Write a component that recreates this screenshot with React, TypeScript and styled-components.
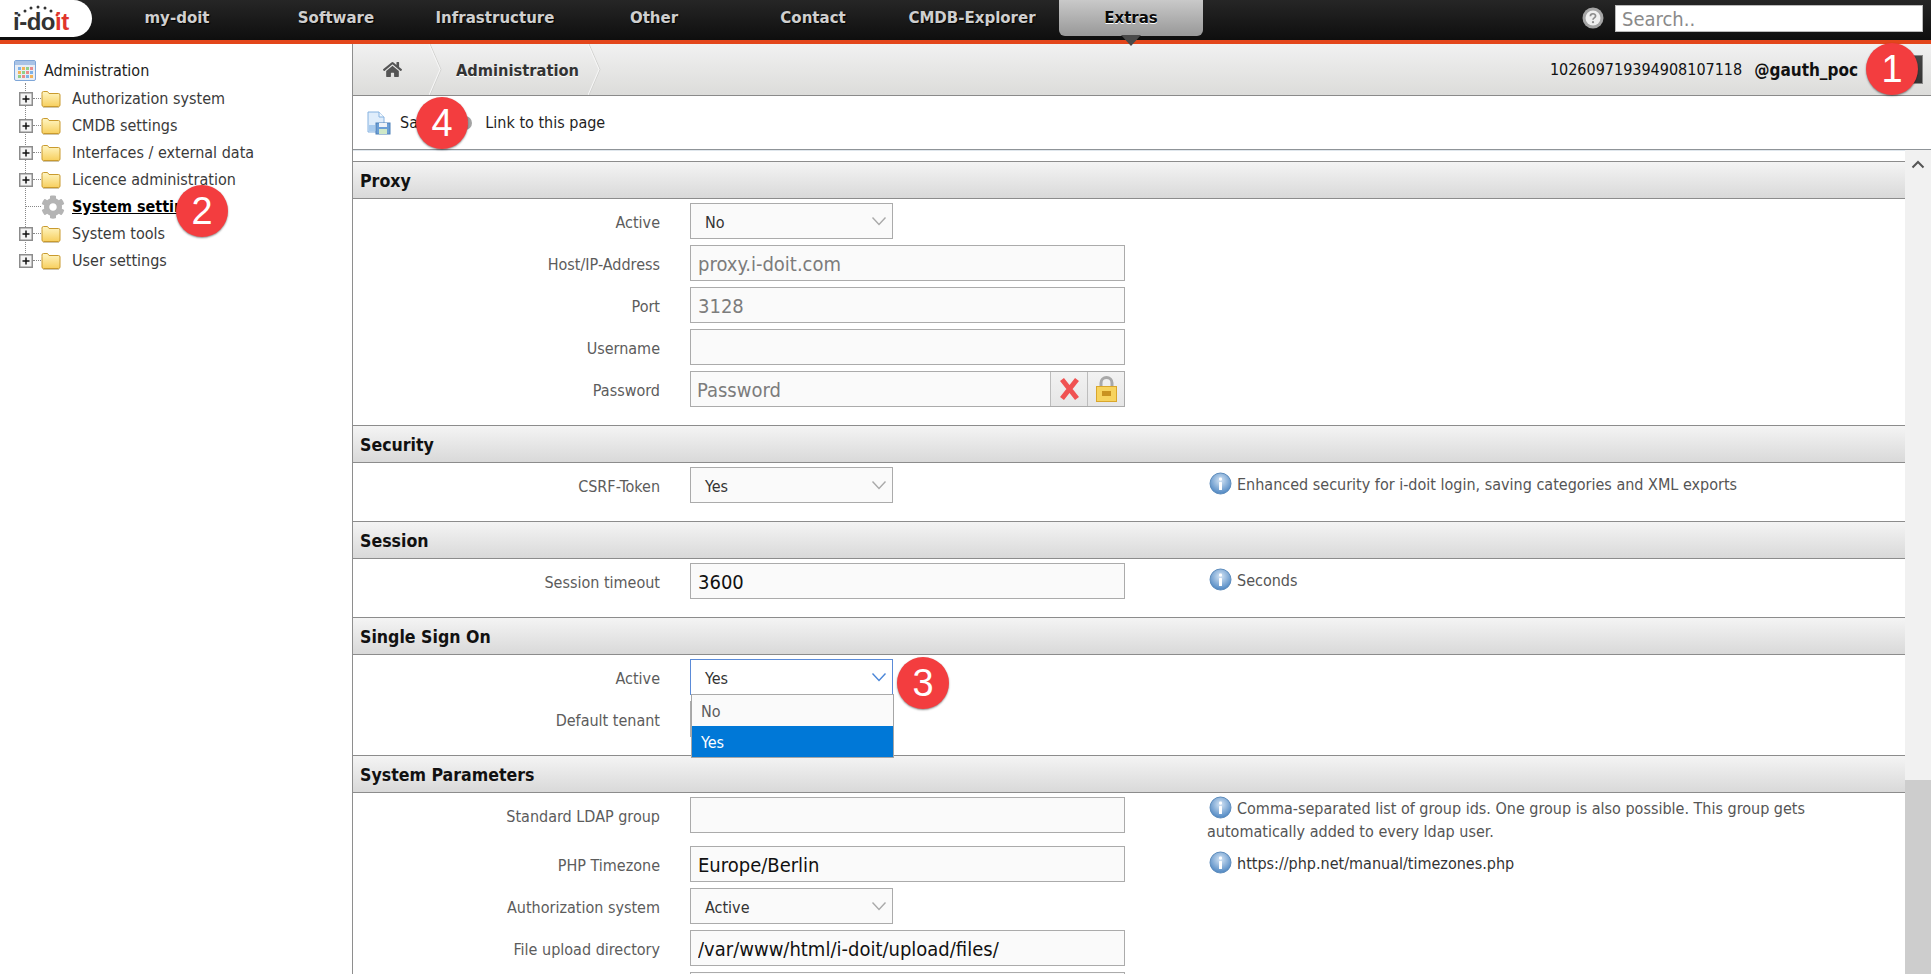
import React from "react";
import styled, { createGlobalStyle } from "styled-components";
import { FaHome, FaCog } from "react-icons/fa";

const Global = createGlobalStyle`
  html, body { margin: 0; padding: 0; height: 100%; overflow: hidden; background: #fff; }
  * { box-sizing: border-box; }
  body { font-family: "DejaVu Sans Condensed", "DejaVu Sans", sans-serif; font-size: 16px; color: #222; }
`;

const Page = styled.div`
  position: relative;
  width: 1931px;
  height: 974px;
  display: flex;
  flex-direction: column;
  overflow: hidden;
`;

const TopBar = styled.header`
  height: 44px;
  flex: none;
  display: flex;
  align-items: flex-start;
  background: linear-gradient(#262626 0, #0e0e0e 40px);
  border-bottom: 4px solid #e3461b;
`;

const Logo = styled.div`
  position: relative;
  width: 92px;
  height: 37px;
  margin-right: 13px;
  flex: none;
  padding: 10px 0 0 13px;
  background: #fff;
  border-radius: 0 19px 19px 0;
  font-family: "Liberation Sans", sans-serif;
  font-size: 24px;
  line-height: 24px;
  font-weight: 700;
  letter-spacing: -0.5px;
  color: #333;
`;

const LogoRed = styled.span`
  color: #e0352b;
`;

const LogoDots = styled.svg`
  position: absolute;
  left: 16px;
  top: 5px;
`;

const Nav = styled.nav`
  display: flex;
  gap: 15px;
`;

const NavItem = styled.a<{ $active?: boolean }>`
  position: relative;
  width: 144px;
  height: ${(p) => (p.$active ? "36px" : "33px")};
  display: flex;
  align-items: ${(p) => (p.$active ? "flex-start" : "center")};
  justify-content: center;
  padding-top: ${(p) => (p.$active ? "7px" : "0")};
  font-weight: 700;
  font-size: 16.7px;
  line-height: 20px;
  color: ${(p) => (p.$active ? "#0a0a0a" : "#cfcfcf")};
  text-shadow: ${(p) => (p.$active ? "0 1px 0 #fff" : "1px 1px 1px #000")};
  background: ${(p) => (p.$active ? "linear-gradient(#c9c9c9, #989898)" : "none")};
  border-radius: ${(p) => (p.$active ? "0 0 6px 6px" : "0")};
`;

const NavPointer = styled.span`
  position: absolute;
  left: 62px;
  top: 35px;
  width: 0;
  height: 0;
  border-left: 10px solid transparent;
  border-right: 10px solid transparent;
  border-top: 11px solid #4a4a4a;
`;

const TopRight = styled.div`
  margin-left: auto;
  display: flex;
  align-items: center;
  gap: 11px;
  padding: 5px 8px 0 0;
`;

const SearchBox = styled.input`
  width: 308px;
  height: 27px;
  border: 1px solid #bbb;
  background: #fff;
  padding: 0 6px;
  font: inherit;
  font-size: 20px;
  color: #222;
  outline: none;
  &::placeholder { color: #8a8a8a; opacity: 1; }
`;

const Main = styled.div`
  flex: 1;
  min-height: 0;
  display: flex;
`;

const Sidebar = styled.aside`
  width: 353px;
  flex: none;
  border-right: 1px solid #8e8e8e;
  padding: 17px 0 0 14px;
`;

const TreeRoot = styled.div`
  display: flex;
  align-items: center;
  gap: 8px;
  height: 20px;
  padding-bottom: 1px;
  color: #1c1c1c;
`;

const TreeChildren = styled.div`
  margin: 2px 0 0 11px;
  padding-top: 2px;
  border-left: 1px dotted #888;
  width: 330px;
  height: 176px;
`;

const TreeRow = styled.div`
  height: 27px;
  display: flex;
  align-items: center;
  margin-left: -7px;
`;

const TreeConnector = styled.span<{ $wide?: boolean }>`
  width: ${(p) => (p.$wide ? "15px" : "8px")};
  margin-left: ${(p) => (p.$wide ? "7px" : "0")};
  border-top: 1px dotted #888;
  flex: none;
`;

const TreeLabel = styled.span<{ $current?: boolean }>`
  margin-left: ${(p) => (p.$current ? "7px" : "11px")};
  color: ${(p) => (p.$current ? "#000" : "#3a3a3a")};
  font-weight: ${(p) => (p.$current ? 700 : 400)};
  text-decoration: ${(p) => (p.$current ? "underline" : "none")};
  white-space: nowrap;
`;

const GearIcon = styled(FaCog)`
  color: #b4b4b4;
  font-size: 24px;
  flex: none;
`;

const Content = styled.main`
  flex: 1;
  min-width: 0;
  display: flex;
  flex-direction: column;
`;

const Breadcrumb = styled.div`
  height: 52px;
  flex: none;
  display: flex;
  align-items: stretch;
  background: linear-gradient(#f1f1f1, #dcdcda);
  border-bottom: 1px solid #8a8a8a;
`;

const HomeCrumb = styled.div`
  width: 76px;
  display: flex;
  align-items: center;
  justify-content: center;
  padding-left: 2px;
  color: #555;
  font-size: 19px;
`;

const CrumbText = styled.div`
  padding: 2px 9px 0 14px;
  display: flex;
  align-items: center;
  font-weight: 700;
  font-size: 16.3px;
  color: #333;
  text-shadow: 0 1px 0 #fff;
`;

const BreadcrumbRight = styled.div`
  margin-left: auto;
  display: flex;
  align-items: center;
  padding: 0 8px 0 0;
  color: #111;
`;

const UserName = styled.b`
  margin: 0 35px 0 12px;
  font-size: 17px;
  color: #111;
`;

const UserButton = styled.div`
  width: 30px;
  height: 29px;
  background: linear-gradient(135deg, #555, #333);
  border: 1px solid #888;
`;

const Toolbar = styled.div`
  height: 54px;
  flex: none;
  display: flex;
  align-items: center;
  padding-left: 14px;
  background: #fff;
  border-bottom: 1px solid #8f9498;
  box-shadow: 0 1px 0 #dfe6ec;
  color: #1f1f1f;
`;

const ToolLabel = styled.span`
  margin-left: 9px;
`;

const LinkLabel = styled.span`
  margin-left: 12px;
`;

const LinkIcon = styled.svg`
  margin-left: 22px;
`;

const ScrollRow = styled.div`
  flex: 1;
  min-height: 0;
  display: flex;
`;

const Sections = styled.div`
  flex: 1;
  min-width: 0;
  overflow: hidden;
  padding-top: 11px;
  position: relative;
`;

const FakeScrollbar = styled.div`
  width: 26px;
  flex: none;
  background: #f1f1f1;
  display: flex;
  flex-direction: column;
  align-items: center;
  padding-top: 10px;
`;

const ScrollThumb = styled.div`
  width: 100%;
  height: 194px;
  margin-top: auto;
  background: #cdcdcd;
`;

const SectionHead = styled.h2`
  margin: 0;
  height: 38px;
  display: flex;
  align-items: center;
  padding: 1px 0 0 7px;
  font-size: 17.6px;
  font-weight: 700;
  color: #111;
  background: linear-gradient(#f4f4f4, #d9d9d9);
  border-top: 1px solid #8c8c8c;
  border-bottom: 1px solid #8c8c8c;
`;

const SectionBody = styled.div`
  display: flex;
  flex-direction: column;
  gap: 6px;
  padding: 4px 0 18px;
`;

const Row = styled.div<{ $tall?: boolean }>`
  display: grid;
  grid-template-columns: 307px 435px 1fr;
  column-gap: 30px;
  height: ${(p) => (p.$tall ? "43px" : "36px")};
  position: relative;
`;

const RowLabel = styled.label`
  height: 36px;
  display: flex;
  align-items: center;
  justify-content: flex-end;
  padding-top: 2px;
  color: #5c5c5c;
`;

const TextField = styled.input<{ $muted?: boolean }>`
  width: 435px;
  height: 36px;
  border: 1px solid #ababab;
  background: #fafafa;
  padding: 1px 7px 0 7px;
  font: inherit;
  font-size: 20px;
  color: ${(p) => (p.$muted ? "#7c7c7c" : "#111")};
  outline: none;
  &::placeholder { color: #7c7c7c; opacity: 1; }
`;

const GroupField = styled.div`
  display: flex;
  width: 435px;
  height: 36px;
  border: 1px solid #ababab;
  background: #fafafa;
`;

const GroupInput = styled.input`
  flex: 1;
  min-width: 0;
  border: 0;
  background: transparent;
  padding: 1px 6px 0;
  font: inherit;
  font-size: 20px;
  outline: none;
  &::placeholder { color: #7c7c7c; opacity: 1; }
`;

const AddOn = styled.span`
  width: 37px;
  flex: none;
  display: flex;
  align-items: center;
  justify-content: center;
  background: linear-gradient(#f2f2f2, #e6e6e6);
  border-left: 1px solid #bdbdbd;
`;

const SelectBox = styled.div<{ $open?: boolean }>`
  position: relative;
  width: 203px;
  height: 36px;
  display: flex;
  align-items: center;
  justify-content: space-between;
  padding: 2px 5px 0 14px;
  background: ${(p) => (p.$open ? "#fff" : "#fafafa")};
  border: 1px solid ${(p) => (p.$open ? "#5b8bd8" : "#ababab")};
  color: #333;
`;

const Menu = styled.div`
  position: absolute;
  left: 0;
  top: 34px;
  width: 203px;
  background: #fafafa;
  border: 1px solid #a6a6a6;
  border-top: 1px solid #aaa;
  z-index: 3;
`;

const MenuItem = styled.div<{ $selected?: boolean }>`
  height: 31px;
  display: flex;
  align-items: center;
  padding: 2px 0 0 9px;
  color: ${(p) => (p.$selected ? "#fff" : "#5c5c5c")};
  background: ${(p) => (p.$selected ? "#0078d7" : "transparent")};
`;

const Description = styled.div<{ $top?: boolean }>`
  margin-left: 52px;
  height: 36px;
  line-height: 23px;
  padding-top: ${(p) => (p.$top ? "0" : "5px")};
  margin-top: ${(p) => (p.$top ? "-1px" : "0")};
  color: #555;
  width: 620px;
`;

const DescLink = styled.span`
  color: #333;
`;

const InfoWrap = styled.svg`
  vertical-align: -5px;
  margin: 0 5px 0 2px;
`;

const Badge = styled.div<{ $x: number; $y: number }>`
  position: absolute;
  left: ${(p) => p.$x - 26}px;
  top: ${(p) => p.$y - 26}px;
  width: 52px;
  height: 52px;
  border-radius: 50%;
  background: #f33d3f;
  box-shadow: 0 1px 2px rgba(0, 0, 0, 0.45);
  color: #fff;
  display: flex;
  align-items: center;
  justify-content: center;
  font-family: "Liberation Sans", sans-serif;
  font-size: 38px;
  line-height: 1;
  z-index: 5;
`;

const Info = () => (
  <InfoWrap width="23" height="23" viewBox="0 0 23 23">
    <defs>
      <radialGradient id="ig" cx="50%" cy="35%" r="65%">
        <stop offset="0" stopColor="#d5e5f5" />
        <stop offset="1" stopColor="#4d86c2" />
      </radialGradient>
    </defs>
    <circle cx="11.5" cy="11.5" r="10.5" fill="url(#ig)" stroke="#5d8cbc" />
    <rect x="10" y="10" width="3" height="8" rx="0.5" fill="#fff" />
    <rect x="10" y="5.5" width="3" height="3" rx="1" fill="#fff" />
  </InfoWrap>
);

const Chevron = ({ color = "#a9a9a9" }: { color?: string }) => (
  <svg width="16" height="10" viewBox="0 0 16 10" style={{ marginTop: "-2px" }}>
    <path d="M1.5 1.5 8 8.5l6.5-7" fill="none" stroke={color} strokeWidth="1.4" />
  </svg>
);

const Select = ({ value, open }: { value: string; open?: boolean }) => (
  <SelectBox $open={open}>
    {value}
    <Chevron color={open ? "#4a86d8" : "#a9a9a9"} />
    {open && (
      <Menu>
        <MenuItem>No</MenuItem>
        <MenuItem $selected>Yes</MenuItem>
      </Menu>
    )}
  </SelectBox>
);

const Folder = () => (
  <svg width="20" height="18" viewBox="0 0 20 18" style={{ flex: "none" }}>
    <defs>
      <linearGradient id="fg" x1="0" y1="0" x2="0" y2="1">
        <stop offset="0" stopColor="#fff6c4" />
        <stop offset="1" stopColor="#f7cf5e" />
      </linearGradient>
    </defs>
    <path d="M1 4.5V3q0-1.5 1.5-1.5h4L8 3.5h9.5Q19 3.5 19 5v10q0 1.5-1.5 1.5h-15Q1 16.5 1 15Z" fill="url(#fg)" stroke="#c99a2e" />
    <path d="M2 17.5h16" stroke="#cfc6ad" />
  </svg>
);

const PlusBox = () => (
  <svg width="14" height="14" viewBox="0 0 14 14" style={{ flex: "none" }}>
    <rect x="0.75" y="0.75" width="12.5" height="12.5" fill="#f4f4f4" stroke="#8c8c8c" strokeWidth="1.5" />
    <path d="M3.5 7h7M7 3.5v7" stroke="#111" strokeWidth="1.5" />
  </svg>
);

const AdminIcon = () => (
  <svg width="22" height="21" viewBox="0 0 22 21" style={{ flex: "none" }}>
    <rect x="0.5" y="0.5" width="21" height="20" rx="1.5" fill="#e9eef5" stroke="#7ea6d8" />
    <rect x="1" y="1" width="20" height="4" fill="#a9c3e6" />
    {[7, 11, 15].map((y, r) =>
      [4, 8, 12, 16].map((x, c) => (
        <rect key={`${x}${y}`} x={x} y={y} width="3" height="3" fill={["#7fb2e8", "#f2b45a", "#8fcf8a", "#e98b8b"][(r + c) % 4]} />
      ))
    )}
  </svg>
);

const SaveIcon = () => (
  <svg width="24" height="24" viewBox="0 0 24 24" style={{ flex: "none" }}>
    <path d="M1 1h11l5 5v15H1Z" fill="#dfedfb" stroke="#86b2e0" />
    <path d="M12 1v5h5" fill="#f4f9fe" stroke="#86b2e0" />
    <path d="M2 14h6v6H2Z" fill="#a8cbee" />
    <rect x="9" y="12" width="14" height="11" fill="#6c9fd6" stroke="#4c80b8" />
    <rect x="12" y="12" width="8" height="4" fill="#eef3f8" />
    <rect x="12" y="18" width="8" height="5" fill="#cfe8c8" />
  </svg>
);

const HelpIcon = () => (
  <svg width="22" height="22" viewBox="0 0 22 22" style={{ flex: "none", marginTop: "-1px" }}>
    <circle cx="11" cy="11" r="10.5" fill="#a5a5a5" />
    <circle cx="11" cy="11" r="7.5" fill="#efefef" />
    <path d="M8.4 9.2c0-3.2 5.2-3.2 5.2-.2 0 1.9-2.6 1.8-2.6 3.7" fill="none" stroke="#8c8c8c" strokeWidth="1.7" />
    <circle cx="11" cy="15.2" r="1.1" fill="#8c8c8c" />
  </svg>
);

const CrumbEdge = () => (
  <svg width="13" height="51" viewBox="0 0 13 51" style={{ flex: "none" }}>
    <path d="M1 0l11 25.5L1 51" fill="none" stroke="#d2d2d0" />
    <path d="M0 0l11 25.5L0 51" fill="none" stroke="#f7f7f7" />
  </svg>
);

const RedX = () => (
  <svg width="21" height="24" viewBox="0 0 21 24">
    <path d="M3 2.5l15 19M18 2.5l-15 19" stroke="#f05252" strokeWidth="5" />
  </svg>
);

const Lock = () => (
  <svg width="23" height="26" viewBox="0 0 23 26">
    <path d="M6 11V7a5.5 5.5 0 0 1 11 0v4" fill="none" stroke="#a8a8a8" strokeWidth="3" />
    <rect x="1.5" y="10.5" width="20" height="15" fill="#f7d35e" stroke="#d9a62c" />
    <rect x="7" y="15" width="9" height="5" fill="#c99220" />
  </svg>
);

const Field = ({ label, children, tall, desc }: { label: string; children: React.ReactNode; tall?: boolean; desc?: React.ReactNode }) => (
  <Row $tall={tall}>
    <RowLabel>{label}</RowLabel>
    <div>{children}</div>
    {desc}
  </Row>
);

const tree: { label: string; current?: boolean }[] = [
  { label: "Authorization system" },
  { label: "CMDB settings" },
  { label: "Interfaces / external data" },
  { label: "Licence administration" },
  { label: "System settings", current: true },
  { label: "System tools" },
  { label: "User settings" },
];

const navItems = ["my-doit", "Software", "Infrastructure", "Other", "Contact", "CMDB-Explorer"];

export default function App() {
  return (
    <Page>
      <Global />
      <TopBar>
        <Logo>
          i-do<LogoRed>it</LogoRed>
          <LogoDots width="46" height="12" viewBox="0 0 46 12">
            {[[3, 10], [9, 6], [15, 3], [22, 2], [29, 3], [35, 6], [41, 10]].map(([x, y]) => (
              <circle key={x} cx={x} cy={y} r="1.5" fill={x === 41 ? "#e0352b" : "#333"} />
            ))}
          </LogoDots>
        </Logo>
        <Nav>
          {navItems.map((n) => (
            <NavItem key={n}>{n}</NavItem>
          ))}
          <NavItem $active>
            Extras
            <NavPointer />
          </NavItem>
        </Nav>
        <TopRight>
          <HelpIcon />
          <SearchBox placeholder="Search.." readOnly />
        </TopRight>
      </TopBar>
      <Main>
        <Sidebar>
          <TreeRoot>
            <AdminIcon />
            Administration
          </TreeRoot>
          <TreeChildren>
            {tree.map((t) => (
              <TreeRow key={t.label}>
                {t.current ? (
                  <>
                    <TreeConnector $wide />
                    <GearIcon />
                  </>
                ) : (
                  <>
                    <PlusBox />
                    <TreeConnector />
                    <Folder />
                  </>
                )}
                <TreeLabel $current={t.current}>{t.label}</TreeLabel>
              </TreeRow>
            ))}
          </TreeChildren>
        </Sidebar>
        <Content>
          <Breadcrumb>
            <HomeCrumb>
              <FaHome />
            </HomeCrumb>
            <CrumbEdge />
            <CrumbText>Administration</CrumbText>
            <CrumbEdge />
            <BreadcrumbRight>
              102609719394908107118
              <UserName>@gauth_poc</UserName>
              <UserButton />
            </BreadcrumbRight>
          </Breadcrumb>
          <Toolbar>
            <SaveIcon />
            <ToolLabel>Save</ToolLabel>
            <LinkIcon width="16" height="16" viewBox="0 0 16 16">
              <circle cx="8" cy="8" r="7" fill="#a3a3a3" />
              <circle cx="8" cy="8" r="3" fill="#eee" />
            </LinkIcon>
            <LinkLabel>Link to this page</LinkLabel>
          </Toolbar>
          <ScrollRow>
            <Sections>
              <SectionHead>Proxy</SectionHead>
              <SectionBody>
                <Field label="Active"><Select value="No" /></Field>
                <Field label="Host/IP-Address"><TextField $muted readOnly value="proxy.i-doit.com" /></Field>
                <Field label="Port"><TextField $muted readOnly value="3128" /></Field>
                <Field label="Username"><TextField readOnly /></Field>
                <Field label="Password">
                  <GroupField>
                    <GroupInput placeholder="Password" readOnly />
                    <AddOn><RedX /></AddOn>
                    <AddOn><Lock /></AddOn>
                  </GroupField>
                </Field>
              </SectionBody>
              <SectionHead>Security</SectionHead>
              <SectionBody>
                <Field label="CSRF-Token" desc={<Description><Info />Enhanced security for i-doit login, saving categories and XML exports</Description>}>
                  <Select value="Yes" />
                </Field>
              </SectionBody>
              <SectionHead>Session</SectionHead>
              <SectionBody>
                <Field label="Session timeout" desc={<Description><Info />Seconds</Description>}>
                  <TextField readOnly value="3600" />
                </Field>
              </SectionBody>
              <SectionHead>Single Sign On</SectionHead>
              <SectionBody>
                <Field label="Active"><Select value="Yes" open /></Field>
                <Field label="Default tenant"><Select value="" /></Field>
              </SectionBody>
              <SectionHead>System Parameters</SectionHead>
              <SectionBody>
                <Field
                  label="Standard LDAP group"
                  tall
                  desc={<Description $top><Info />Comma-separated list of group ids. One group is also possible. This group gets automatically added to every ldap user.</Description>}
                >
                  <TextField readOnly />
                </Field>
                <Field label="PHP Timezone" desc={<Description><Info /><DescLink>https://php.net/manual/timezones.php</DescLink></Description>}>
                  <TextField readOnly value="Europe/Berlin" />
                </Field>
                <Field label="Authorization system"><Select value="Active" /></Field>
                <Field label="File upload directory"><TextField readOnly value="/var/www/html/i-doit/upload/files/" /></Field>
                <Field label=""><TextField readOnly /></Field>
              </SectionBody>
            </Sections>
            <FakeScrollbar>
              <svg width="14" height="9" viewBox="0 0 14 9">
                <path d="M1.5 7.5 7 2l5.5 5.5" fill="none" stroke="#555" strokeWidth="2" />
              </svg>
              <ScrollThumb />
            </FakeScrollbar>
          </ScrollRow>
        </Content>
      </Main>
      <Badge $x={1892} $y={69}>1</Badge>
      <Badge $x={202} $y={211}>2</Badge>
      <Badge $x={923} $y={683}>3</Badge>
      <Badge $x={442} $y={123}>4</Badge>
    </Page>
  );
}
